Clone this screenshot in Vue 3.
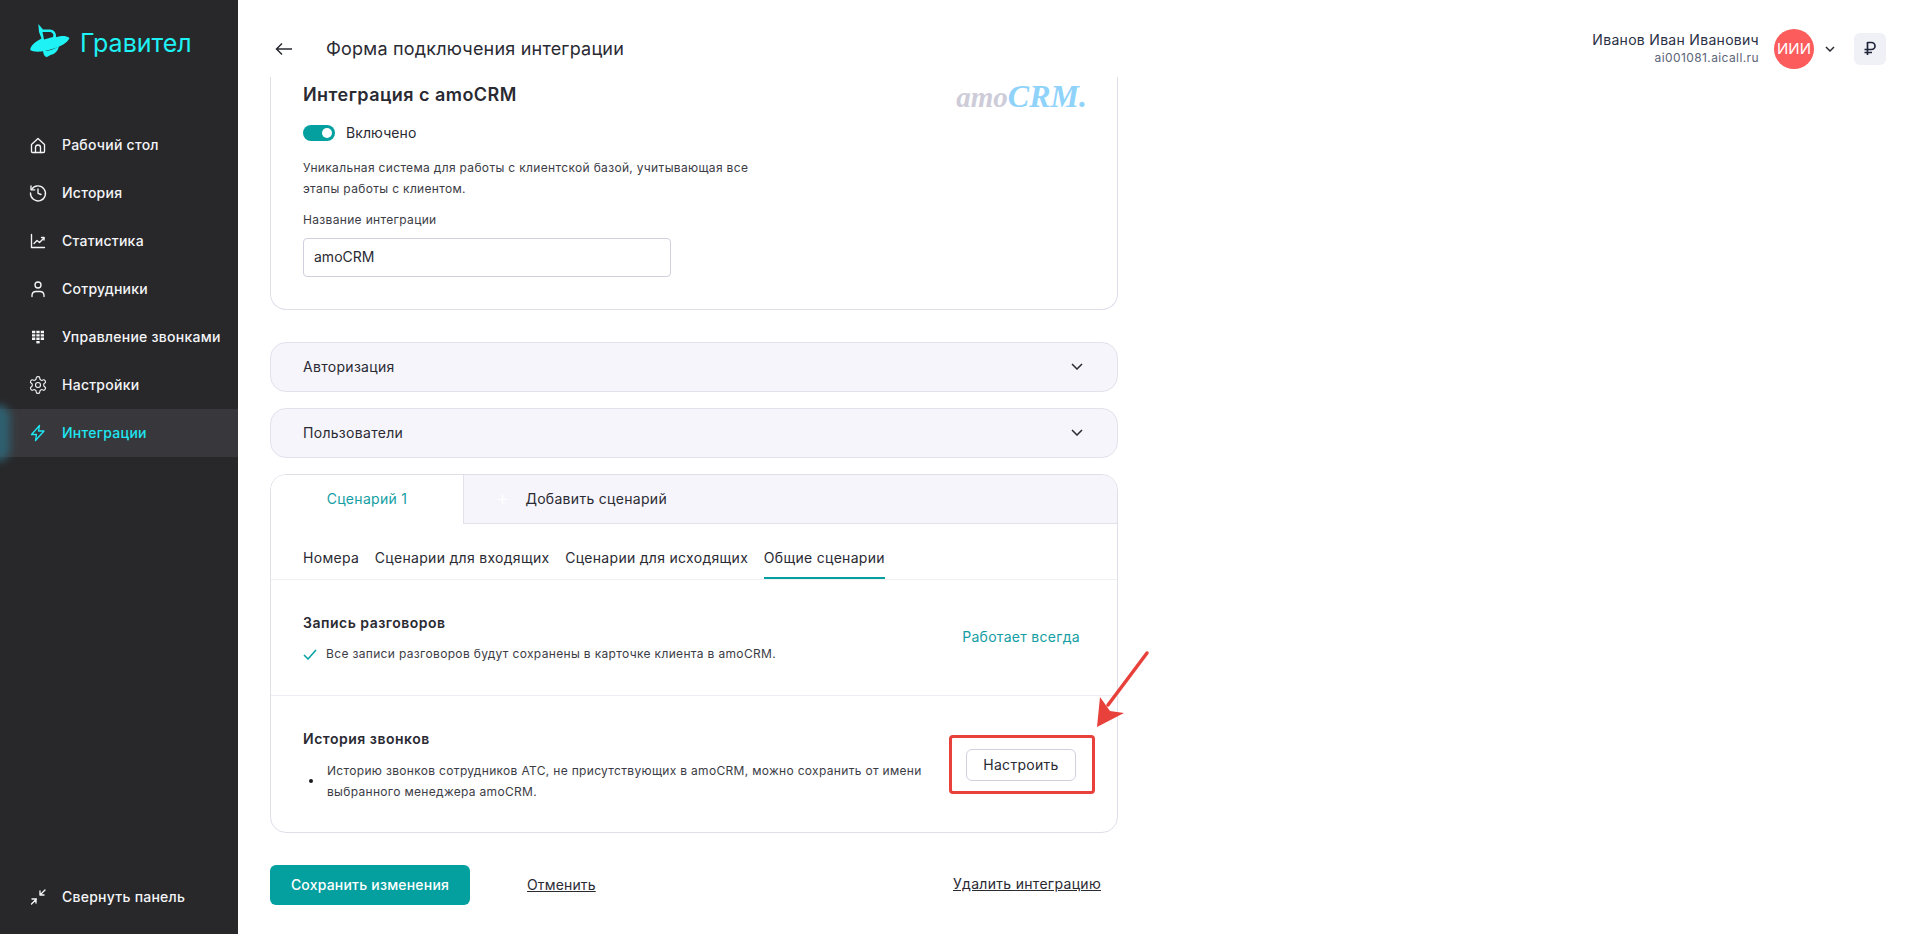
<script setup>
const nav = [
  { label: 'Рабочий стол', d: ['M3.5 9.5 10 3.500l6.500 6v7a1 1 0 0 1-1 1h-11a1 1 0 0 1-1-1z', 'M7.500 17.500v-5a2.500 2.500 0 0 1 5 0v5'] },
  { label: 'История', d: ['M3.600 6.500A7.500 7.500 0 1 1 2.500 10', 'M3 3v3.800h3.800', 'M10 6v4.300l3 1.200'] },
  { label: 'Статистика', d: ['M3.500 3.500v13h13', 'M6 12.500l3-3 2.500 2 4.500-4.500', 'M13.500 6.500H16V9'] },
  { label: 'Сотрудники', d: ['M10 3a3 3 0 1 1 0 6 3 3 0 0 1 0-6z', 'M4 17.500V16a4 4 0 0 1 4-3.500h4a4 4 0 0 1 4 3.500v1.500'] },
  { label: 'Управление звонками', grid: true, d: ['M4 5h3.300M8.350 5h3.300M12.700 5H16', 'M4 8.400h3.300M8.350 8.400h3.300M12.700 8.400H16', 'M4 11.800h3.300M8.350 11.800h3.300M12.700 11.800H16', 'M8.350 15.200h3.300'] },
  { label: 'Настройки', gear: true, d: ['M12.220 2h-.44a2 2 0 0 0-2 2v.18a2 2 0 0 1-1 1.730l-.43.25a2 2 0 0 1-2 0l-.15-.08a2 2 0 0 0-2.730.73l-.22.38a2 2 0 0 0 .73 2.730l.15.1a2 2 0 0 1 1 1.720v.51a2 2 0 0 1-1 1.740l-.15.09a2 2 0 0 0-.73 2.730l.22.38a2 2 0 0 0 2.730.73l.15-.08a2 2 0 0 1 2 0l.43.25a2 2 0 0 1 1 1.730V20a2 2 0 0 0 2 2h.44a2 2 0 0 0 2-2v-.18a2 2 0 0 1 1-1.730l.43-.25a2 2 0 0 1 2 0l.15.08a2 2 0 0 0 2.730-.73l.22-.39a2 2 0 0 0-.73-2.730l-.15-.08a2 2 0 0 1-1-1.740v-.5a2 2 0 0 1 1-1.740l.15-.09a2 2 0 0 0 .73-2.730l-.22-.38a2 2 0 0 0-2.730-.73l-.15.08a2 2 0 0 1-2 0l-.43-.25a2 2 0 0 1-1-1.730V4a2 2 0 0 0-2-2z', 'M12 9a3 3 0 1 1 0 6 3 3 0 0 1 0-6z'] },
  { label: 'Интеграции', active: true, d: ['M11.500 2.500 3.500 11.500h5l-1 6 8.500-9.500h-5.500z'] }
]
const subtabs = ['Номера', 'Сценарии для входящих', 'Сценарии для исходящих', 'Общие сценарии']
</script>

<template>
  <div class="page">
    <aside class="sidebar">
      <div class="brand">
        <svg class="logo" width="40" height="33" viewBox="0 0 40 33">
          <path fill="#1ef2f5" d="M8.300 0 13 5.500h7c4 0 6.500 3.500 6 7.800 4-1.600 9.500-2.300 13.500.7-2 5-9 8.500-17 11-8 2.500-18.500 4-22.200 1-.5-3.500 5-8.500 11.200-11.500L9 8z" />
          <path fill="#28282a" d="M12.500 8 14 15.500l9-2.500c1-2.500-.5-5-3.500-5z" />
          <path fill="#1ef2f5" d="M13 27c6 0 12-2 16-5-1 5-4 8-8.500 9L17 33c-2 0-3.500-2-4-6z" />
        </svg>
        <span class="brand-name">Гравител</span>
      </div>
      <nav class="nav">
        <a v-for="item in nav" :key="item.label" class="nav-item" :class="{ active: item.active }">
          <span v-if="item.active" class="glow"></span>
          <svg class="nav-icon" :class="{ grid: item.grid }" :viewBox="item.gear ? '0 0 24 24' : '0 0 20 20'" width="20" height="20">
            <path v-for="p in item.d" :key="p" :d="p" />
          </svg>
          <span>{{ item.label }}</span>
        </a>
      </nav>
      <a class="nav-item collapse">
        <svg class="nav-icon" viewBox="0 0 20 20" width="20" height="20">
          <path d="M17 3l-5 5M12 4v4h4M3.500 17l5-5M4 12h4v4" />
        </svg>
        <span>Свернуть панель</span>
      </a>
    </aside>

    <main class="main">
      <header class="topbar">
        <svg class="back" width="18" height="14" viewBox="0 0 18 14">
          <path d="M17 7H1.500M7 1.500 1.500 7 7 12.500" />
        </svg>
        <h1 class="title">Форма подключения интеграции</h1>
        <div class="user">
          <div class="user-text">
            <div class="user-name">Иванов Иван Иванович</div>
            <div class="user-domain">ai001081.aicall.ru</div>
          </div>
          <div class="avatar">ИИИ</div>
          <svg class="chev user-chev" width="10" height="6" viewBox="0 0 10 6"><path d="M1 1l4 4 4-4" /></svg>
          <div class="balance">
            <svg class="rub" width="14" height="15" viewBox="0 0 14 15"><path d="M4.500 1v13M4.500 1.500h4a3.500 3.500 0 0 1 0 7H1.500M1.500 11.500h7.500" /></svg>
          </div>
        </div>
      </header>

      <div class="content">
        <section class="card intro">
          <div class="intro-top">
            <h2 class="intro-title">Интеграция с amoCRM</h2>
            <div class="amo"><span class="amo-a">amo</span><span class="amo-c">CRM.</span></div>
          </div>
          <label class="switch-row">
            <span class="switch"><span class="knob"></span></span>
            <span class="switch-label">Включено</span>
          </label>
          <p class="intro-desc">Уникальная система для работы с клиентской базой, учитывающая все<br />этапы работы с клиентом.</p>
          <div class="field-label">Название интеграции</div>
          <div class="input">amoCRM</div>
        </section>

        <div class="accordion">
          <span>Авторизация</span>
          <svg class="chev" width="12" height="7" viewBox="0 0 12 7"><path d="M1 1l5 5 5-5" /></svg>
        </div>
        <div class="accordion">
          <span>Пользователи</span>
          <svg class="chev" width="12" height="7" viewBox="0 0 12 7"><path d="M1 1l5 5 5-5" /></svg>
        </div>

        <section class="card scen">
          <div class="tabs">
            <div class="tab current">Сценарий 1</div>
            <div class="tab add"><span class="plus">+</span>Добавить сценарий</div>
          </div>
          <div class="subtabs">
            <span v-for="(s, i) in subtabs" :key="s" class="subtab" :class="{ on: i === 3 }">{{ s }}</span>
          </div>
          <div class="block first">
            <div class="block-main">
              <h3 class="block-title">Запись разговоров</h3>
              <div class="check-row">
                <svg class="check" width="14" height="11" viewBox="0 0 14 11"><path d="M1 6l4 4 8-9" /></svg>
                <span>Все записи разговоров будут сохранены в карточке клиента в amoCRM.</span>
              </div>
            </div>
            <span class="always">Работает всегда</span>
          </div>
          <div class="block second">
            <div class="block-main">
              <h3 class="block-title">История звонков</h3>
              <div class="bullet-row">
                <span class="dot"></span>
                <span>Историю звонков сотрудников АТС, не присутствующих в amoCRM, можно сохранить от имени выбранного менеджера amoCRM.</span>
              </div>
            </div>
            <button class="setup">Настроить</button>
          </div>
        </section>

        <div class="actions">
          <button class="save">Сохранить изменения</button>
          <a class="link cancel">Отменить</a>
          <a class="link remove">Удалить интеграцию</a>
        </div>
      </div>

      <div class="red-box"></div>
      <svg class="arrow" width="60" height="84" viewBox="0 0 60 84">
        <path d="M57 10 L18 62" fill="none" stroke="#e8403a" stroke-width="3.500" stroke-linecap="round" />
        <path d="M7 84 L10 54 L20 68 L34 70 Z" fill="#e8403a" />
      </svg>
    </main>
  </div>
</template>

<style>
html, body { margin: 0; background: #fff; }
</style>

<style scoped>
.page {
  display: flex;
  width: 100%;
  height: 934px;
  overflow: hidden;
  font-family: Inter, "Liberation Sans", sans-serif;
  letter-spacing: 0.3px;
  color: #2a2a33;
  background: #fff;
}
.sidebar {
  width: 238px;
  flex: none;
  background: #28282a;
  display: flex;
  flex-direction: column;
  overflow: hidden;
}
.brand {
  height: 97px;
  padding: 24px 0 0 30px;
  box-sizing: border-box;
  display: flex;
  align-items: flex-start;
  gap: 10px;
}
.brand-name {
  font-size: 25px;
  line-height: 36px;
  color: #1ef2f5;
  font-weight: 400;
  letter-spacing: 0;
  margin-top: 1px;
}
.nav { margin-top: 24px; display: flex; flex-direction: column; }
.nav-item {
  position: relative;
  height: 48px;
  display: flex;
  align-items: center;
  padding-left: 28px;
  gap: 14px;
  font-size: 14px;
  font-weight: 500;
  letter-spacing: 0.25px;
  color: #f4f5f8;
}
.nav-item > span:last-child { margin-bottom: 2px; }
.nav-item.active { background: #38383c; color: #1ee6f2; }
.glow {
  position: absolute;
  left: -14px;
  top: -4px;
  width: 24px;
  height: 56px;
  border-radius: 12px;
  background: #2f6070;
  filter: blur(4px);
}
.nav-icon { fill: none; stroke: currentColor; stroke-width: 1.35; stroke-linecap: round; stroke-linejoin: round; flex: none; }
.nav-icon.grid { stroke-width: 2.4; stroke-linecap: butt; }
.collapse { margin-top: auto; margin-bottom: 13px; }

.main { position: relative; flex: 1; min-width: 0; }
.topbar {
  height: 77px;
  display: flex;
  align-items: center;
  padding: 20px 21px 0 37px;
  box-sizing: border-box;
}
.back { fill: none; stroke: #2a2a33; stroke-width: 1.5; margin-right: 33px; }
.title { margin: 0; font-size: 18px; font-weight: 400; line-height: 24px; letter-spacing: 0.2px; }
.user { margin-left: auto; display: flex; align-items: center; }
.user-text { text-align: right; margin-right: 15px; }
.user-name { font-size: 14px; line-height: 18px; color: #2a2f45; }
.user-domain { font-size: 12px; line-height: 18px; color: #5b6478; letter-spacing: 0.4px; }
.avatar {
  width: 40px;
  height: 40px;
  border-radius: 50%;
  background: #fc5c5c;
  color: #fff;
  font-size: 15px;
  font-weight: 400;
  letter-spacing: 0;
  display: flex;
  align-items: center;
  justify-content: center;
}
.user-chev { margin: 0 19px 0 11px; }
.balance {
  width: 32px;
  height: 32px;
  border-radius: 6px;
  background: #f0f1f7;
  display: flex;
  align-items: center;
  justify-content: center;
}
.rub { fill: none; stroke: #1f2438; stroke-width: 1.7; }
.chev { fill: none; stroke: #2a2a33; stroke-width: 1.5; }

.content { width: 848px; margin-left: 32px; }
.card { border: 1px solid #dfdfea; box-sizing: border-box; background: #fff; }
.intro {
  height: 233px;
  border-top: 0;
  border-radius: 0 0 16px 16px;
  padding: 0 32px;
}
.intro-top { display: flex; justify-content: space-between; height: 42px; align-items: flex-start; }
.intro-title { margin: 7px 0 0; font-size: 18px; line-height: 22px; font-weight: 600; letter-spacing: 0.45px; }
.amo {
  font-family: "Liberation Serif", serif;
  font-style: italic;
  font-weight: 700;
  line-height: 30px;
  margin-top: 4px;
  margin-right: -2px;
  letter-spacing: 0;
}
.amo-a { color: #cdccd8; font-size: 29px; }
.amo-c { color: #8fd3fb; font-size: 32px; }
.switch-row { display: flex; align-items: center; gap: 11px; font-size: 14px; height: 16px; margin-top: 6px; }
.switch-label { margin-bottom: 2px; letter-spacing: 0.1px; }
.switch {
  width: 32px;
  height: 16px;
  border-radius: 8px;
  background: #04a0a0;
  position: relative;
  flex: none;
}
.knob { position: absolute; right: 3px; top: 3px; width: 10px; height: 10px; border-radius: 50%; background: #fff; }
.intro-desc { margin: 16px 0 0; font-size: 12px; line-height: 21px; color: #3c3c46; letter-spacing: 0.33px; }
.field-label { margin-top: 10px; font-size: 12px; line-height: 21px; color: #3c3c46; letter-spacing: 0.33px; }
.input {
  margin-top: 8px;
  width: 368px;
  height: 39px;
  box-sizing: border-box;
  border: 1px solid #d0d0de;
  border-radius: 4px;
  padding: 0 10px 2px;
  display: flex;
  align-items: center;
  font-size: 14px;
  letter-spacing: 0;
}
.accordion {
  margin-top: 16px;
  height: 50px;
  box-sizing: border-box;
  border: 1px solid #e2e2ec;
  border-radius: 16px;
  background: #f6f5fb;
  padding: 0 34px 2px 32px;
  display: flex;
  align-items: center;
  justify-content: space-between;
  font-size: 14px;
}
.card + .accordion { margin-top: 32px; }
.scen { margin-top: 16px; height: 359px; border-radius: 16px; overflow: hidden; }
.tabs { display: flex; height: 49px; background: #f6f5fb; border-bottom: 1px solid #e2e2ec; box-sizing: border-box; }
.tab { display: flex; align-items: center; font-size: 14px; height: 49px; box-sizing: border-box; padding-bottom: 2px; }
.current {
  width: 193px;
  justify-content: center;
  background: #fff;
  color: #139ea3;
  border-right: 1px solid #e2e2ec;
}
.add { padding-left: 32px; height: 48px; }
.plus { color: #fff; font-size: 20px; margin-right: 16px; font-weight: 300; }
.subtabs {
  display: flex;
  gap: 15.7px;
  height: 56px;
  padding: 0 32px;
  border-bottom: 1px solid #f0f0f5;
  box-sizing: border-box;
}
.subtab {
  font-size: 14px;
  line-height: 20px;
  padding-top: 24px;
  height: 55px;
  box-sizing: border-box;
}
.subtab.on { border-bottom: 2px solid #04a0a0; }
.block { display: flex; justify-content: space-between; padding: 0 32px; box-sizing: border-box; }
.first { height: 116px; border-bottom: 1px solid #ededf3; align-items: flex-start; }
.second { height: 136px; }
.block-title { margin: 0; font-size: 14px; line-height: 20px; font-weight: 600; letter-spacing: 0.5px; }
.first .block-title { margin-top: 33px; }
.second .block-title { margin-top: 33px; }
.check-row { display: flex; align-items: center; gap: 9px; margin-top: 11px; font-size: 12px; line-height: 20px; color: #3c3c46; letter-spacing: 0.34px; }
.check { fill: none; stroke: #04a0a0; stroke-width: 1.5; }
.always { font-size: 14px; line-height: 20px; color: #139ea3; margin-top: 47px; margin-right: 5px; }
.bullet-row { display: flex; align-items: center; margin-top: 11px; font-size: 12px; line-height: 21px; color: #3c3c46; width: 620px; letter-spacing: 0.32px; }
.dot { width: 4px; height: 4px; border-radius: 50%; background: #1a1a22; flex: none; margin: 0 14px 0 6px; }
.setup {
  width: 110px;
  height: 32px;
  margin-top: 53px;
  margin-right: 9px;
  box-sizing: border-box;
  border: 1px solid #d0d0de;
  border-radius: 6px;
  background: #fff;
  font: 400 14px Inter, "Liberation Sans", sans-serif;
  letter-spacing: 0.3px;
  color: #2a2a33;
  padding: 0 0 2px;
}
.actions { display: flex; align-items: center; margin-top: 32px; height: 40px; }
.save {
  width: 200px;
  height: 40px;
  border: 0;
  border-radius: 6px;
  background: #04a0a0;
  color: #fff;
  font: 500 14px Inter, "Liberation Sans", sans-serif;
  letter-spacing: 0.2px;
  padding: 0 0 2px;
}
.link { font-size: 14px; text-decoration: underline; color: #2a2a33; margin-bottom: 2px; }
.cancel { margin-left: 57px; letter-spacing: 0.15px; }
.remove { margin-left: auto; margin-right: 17px; margin-bottom: 3px; }
.red-box {
  position: absolute;
  left: 711px;
  top: 735px;
  width: 146px;
  height: 59px;
  box-sizing: border-box;
  border: 3px solid #e8403a;
  border-radius: 4px;
}
.arrow { position: absolute; left: 852px; top: 643px; }
</style>
